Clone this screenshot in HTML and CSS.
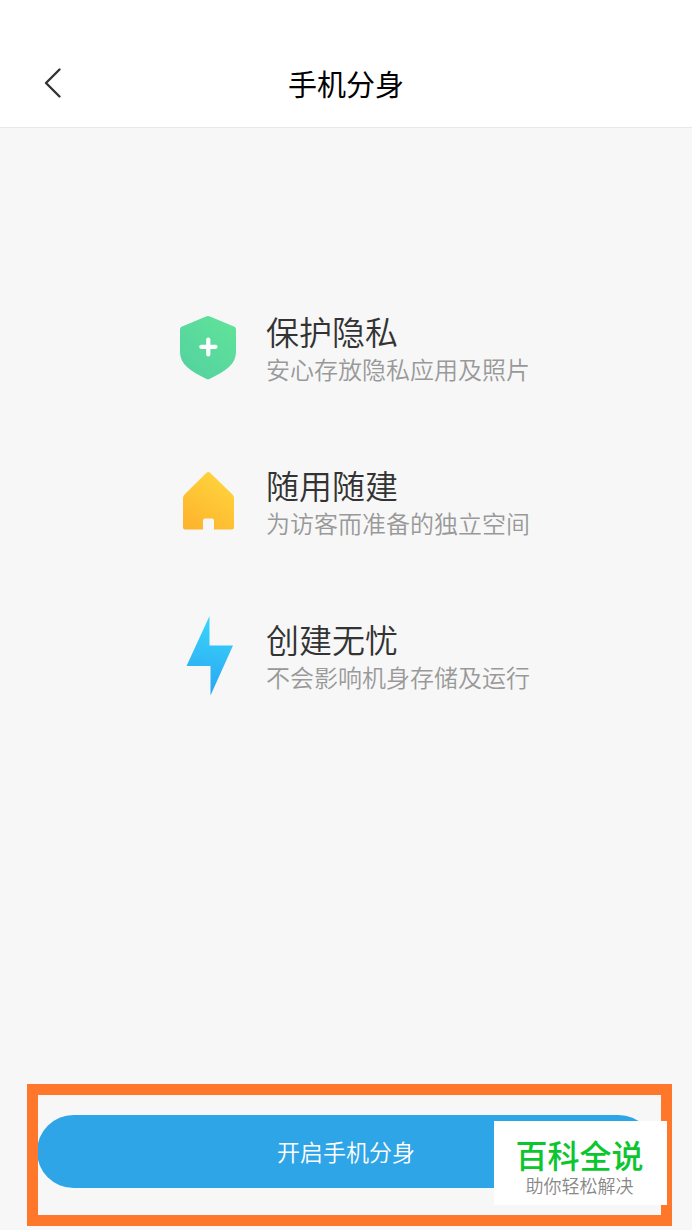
FILE: index.html
```html
<!DOCTYPE html>
<html lang="zh-CN">
<head>
<meta charset="utf-8">
<meta name="viewport" content="width=device-width, initial-scale=1">
<title>手机分身</title>
<link rel="stylesheet" href="styles.css">
</head>
<body>
<header class="topbar">
  <button class="back" type="button" aria-label="返回">
    <svg width="20" height="32" viewBox="0 0 20 32" fill="none" stroke="#333" stroke-width="2.4" stroke-linecap="round" stroke-linejoin="round"><path d="M15.500 2.500L2 16L15.500 29.500"/></svg>
  </button>
  <h1 class="title">手机分身</h1>
</header>
<main class="features">
  <section class="feature">
    <svg class="icon" viewBox="0 0 56 80" aria-hidden="true">
      <defs><linearGradient id="green" x1="1" y1="0" x2="0.200" y2="1"><stop offset="0" stop-color="#61e499"/><stop offset="1" stop-color="#54d29f"/></linearGradient></defs>
      <path fill="url(#green)" d="M26 8.500Q28 7.500 30 8.500L54.500 18.800Q56 19.500 56 21.500V44C56 56 46 63 30 70.700Q28 71.700 26 70.700C10 63 0 56 0 44V21.500Q0 19.500 1.500 18.800Z"/>
      <path d="M28.300 31.500V46.500M21.300 38.800H35.500" stroke="#fff" stroke-width="4.200" stroke-linecap="round"/>
    </svg>
    <div class="copy"><h2 class="name">保护隐私</h2><p class="desc">安心存放隐私应用及照片</p></div>
  </section>
  <section class="feature">
    <svg class="icon" viewBox="0 0 56 80" aria-hidden="true">
      <defs><linearGradient id="yellow" x1="0.800" y1="0" x2="0.200" y2="1"><stop offset="0" stop-color="#ffd63d"/><stop offset="1" stop-color="#fdb42e"/></linearGradient></defs>
      <path fill="url(#yellow)" d="M26.500 10.800Q28.300 9 30.100 10.800L52.500 32.500Q54 34 54 36V65.500Q54 67.500 52 67.500H34V58.500Q34 56.500 32 56.500H25Q23 56.500 23 58.500V67.500H5Q3 67.500 3 65.500V36Q3 34 4.500 32.500Z"/>
    </svg>
    <div class="copy"><h2 class="name">随用随建</h2><p class="desc">为访客而准备的独立空间</p></div>
  </section>
  <section class="feature">
    <svg class="icon" viewBox="0 0 56 80" aria-hidden="true">
      <defs><linearGradient id="blue" x1="0.500" y1="0" x2="0.400" y2="1"><stop offset="0" stop-color="#3bd6fa"/><stop offset="1" stop-color="#29a5f2"/></linearGradient></defs>
      <path fill="url(#blue)" d="M29.500 0V29.500H53L30.500 79.500V50H6.500Z"/>
    </svg>
    <div class="copy"><h2 class="name">创建无忧</h2><p class="desc">不会影响机身存储及运行</p></div>
  </section>
</main>
<footer class="actions">
  <button class="start" type="button">开启手机分身</button>
  <div class="highlight"></div>
  <aside class="brand"><strong class="brand-name">百科全说</strong><span class="brand-line">助你轻松解决</span></aside>
</footer>
</body>
</html>
```
FILE: styles.css
```css
* { box-sizing: border-box; }

body {
  margin: 0;
  min-height: 100vh;
  display: flex;
  flex-direction: column;
  background: #f7f7f7;
  font-family: "Noto Sans CJK SC", sans-serif;
}

h1, h2, p { margin: 0; }

button {
  border: 0;
  font-family: inherit;
  cursor: pointer;
}

.topbar {
  display: grid;
  grid-template-columns: 1fr auto 1fr;
  align-items: center;
  padding: 38px 44px 0;
  height: 128px;
  background: #fff;
  border-bottom: 1px solid #e8e8e8;
}

.back {
  justify-self: start;
  display: flex;
  padding: 0;
  background: none;
}

.title {
  font-size: 29px;
  line-height: 40px;
  font-weight: 400;
  color: #000;
}

.features {
  flex: 1;
  display: flex;
  flex-direction: column;
  gap: 74px;
  padding: 180px 0 40px 26%;
}

.feature {
  display: flex;
  align-items: flex-start;
  gap: 30px;
}

.icon {
  flex: none;
  width: 56px;
  height: 80px;
}

.copy { padding-top: 4px; }

.name {
  font-size: 33px;
  line-height: 38px;
  font-weight: 350;
  color: #333;
}

.desc {
  font-size: 24px;
  line-height: 38px;
  font-weight: 350;
  color: #999;
}

.actions {
  position: relative;
  padding: 32px 37px 42px;
}

.start {
  display: block;
  width: 100%;
  height: 73px;
  padding: 0 0 2px;
  border-radius: 37px;
  background: #2ea5e6;
  color: #fff;
  font-size: 23px;
  font-weight: 350;
}

.highlight {
  position: absolute;
  inset: 1px 20px 4px 27px;
  border: 11px solid #ff772a;
  pointer-events: none;
}

.brand {
  position: absolute;
  right: 25px;
  bottom: 25px;
  width: 173px;
  height: 84px;
  display: flex;
  flex-direction: column;
  align-items: center;
  padding: 15px 2px 0 0;
  background: #fff;
}

.brand-name {
  font-size: 32px;
  line-height: 36px;
  font-weight: 500;
  color: #0bc62f;
}

.brand-line {
  font-size: 18px;
  line-height: 26px;
  color: #888;
  font-weight: 350;
}
```
